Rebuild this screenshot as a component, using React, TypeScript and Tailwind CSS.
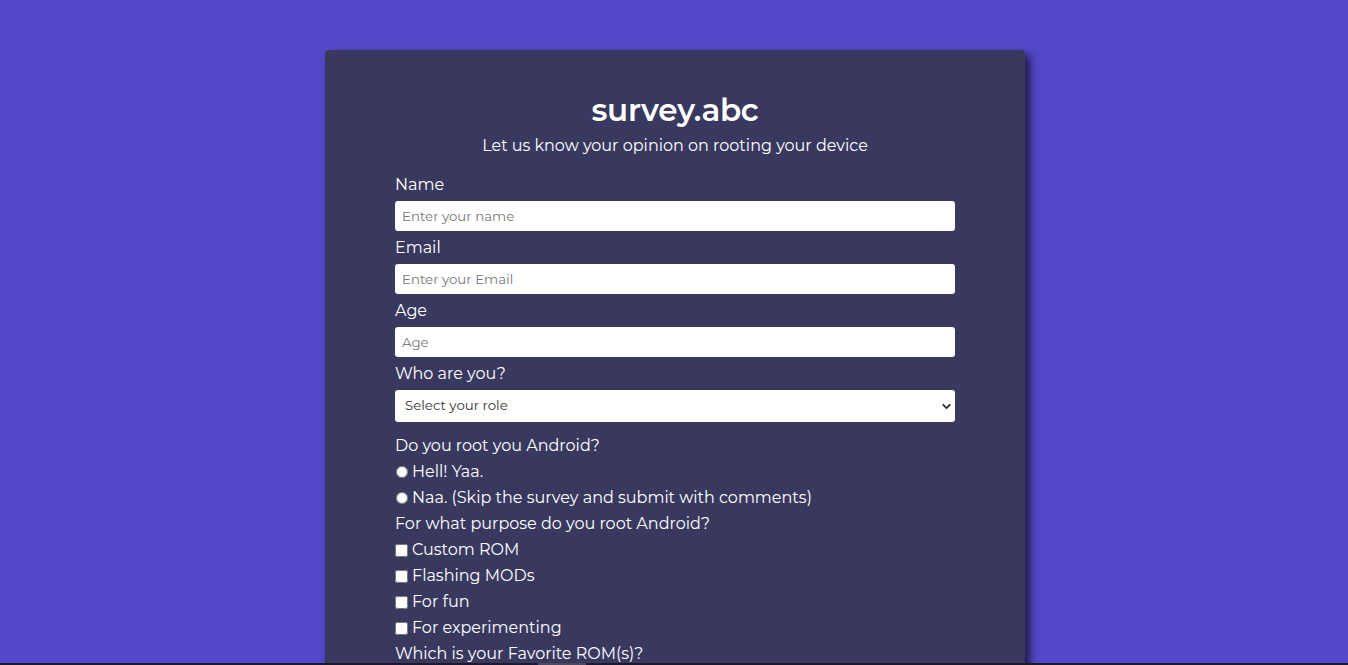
import { ChevronDown } from "lucide-react";

const font = { fontFamily: "Montserrat, 'Open Sans', 'DejaVu Sans', sans-serif" };

function Label({ children }: { children: React.ReactNode }) {
  return <label className="block text-[16px] leading-[25px] mb-[4px] mt-[4px]">{children}</label>;
}

function TextInput({ placeholder, type = "text" }: { placeholder: string; type?: string }) {
  return (
    <input
      type={type}
      placeholder={placeholder}
      className="block w-full h-[30px] rounded-[3px] bg-white px-[7px] text-[13.33px] text-[#333] placeholder:text-[#777] outline-none"
    />
  );
}

export default function App() {
  const purposes = ["Custom ROM", "Flashing MODs", "For fun", "For experimenting"];
  return (
    <div className="min-h-screen bg-[#5448c8] pt-[50px] pb-[50px] pl-[2px] text-white" style={font}>
      <div className="mx-auto w-[700px] rounded-[4px] bg-[#39395f] px-[70px] pt-[40px] pb-[40px] shadow-[5px_5px_8px_rgba(0,0,0,0.65)]">
        <h1 className="text-center text-[31px] leading-[40px] font-semibold tracking-[-0.3px]">survey.abc</h1>
        <p className="text-center text-[16px] leading-[24px] mt-[4px] mb-[14px]">
          Let us know your opinion on rooting your device
        </p>

        <form>
          <Label>Name</Label>
          <TextInput placeholder="Enter your name" />
          <Label>Email</Label>
          <TextInput placeholder="Enter your Email" type="email" />
          <Label>Age</Label>
          <TextInput placeholder="Age" type="number" />
          <Label>Who are you?</Label>
          <div className="relative">
            <select className="block w-full h-[32px] appearance-none rounded-[3px] bg-white pl-[10px] text-[13.33px] text-[#333] outline-none">
              <option>Select your role</option>
              <option>Student</option>
              <option>Developer</option>
              <option>Other</option>
            </select>
            <ChevronDown
              className="pointer-events-none absolute right-[2px] top-[10px] text-[#333]"
              size={13}
              strokeWidth={3.5}
            />
          </div>

          <div className="mt-[11px] text-[16px] leading-[26px]">
            <p>Do you root you Android?</p>
            <label className="flex items-center">
              <input type="radio" name="root" className="m-0 mr-[4px] ml-[1px] w-[12px] h-[12px]" />
              Hell! Yaa.
            </label>
            <label className="flex items-center">
              <input type="radio" name="root" className="m-0 mr-[4px] ml-[1px] w-[12px] h-[12px]" />
              Naa. (Skip the survey and submit with comments)
            </label>
            <p>For what purpose do you root Android?</p>
            {purposes.map((p) => (
              <label key={p} className="flex items-center">
                <input type="checkbox" className="m-0 mr-[4px] w-[13px] h-[13px]" />
                {p}
              </label>
            ))}
            <p>Which is your Favorite ROM(s)?</p>
            <textarea className="mt-[6px] block w-full h-[90px] rounded-[3px] bg-white p-[7px] text-[13.33px] text-[#333]" placeholder="LineageOS, Pixel Experience..." />
            <button type="button" className="mt-[16px] w-full h-[36px] rounded-[3px] bg-[#5448c8] text-white text-[16px]">
              Submit
            </button>
          </div>
        </form>
      </div>
      <div className="fixed bottom-0 left-0 right-0 h-[2px] bg-[#1c1b2b]">
        <div className="ml-[538px] w-[48px] h-full bg-[#4a4a5a]" />
      </div>
    </div>
  );
}
